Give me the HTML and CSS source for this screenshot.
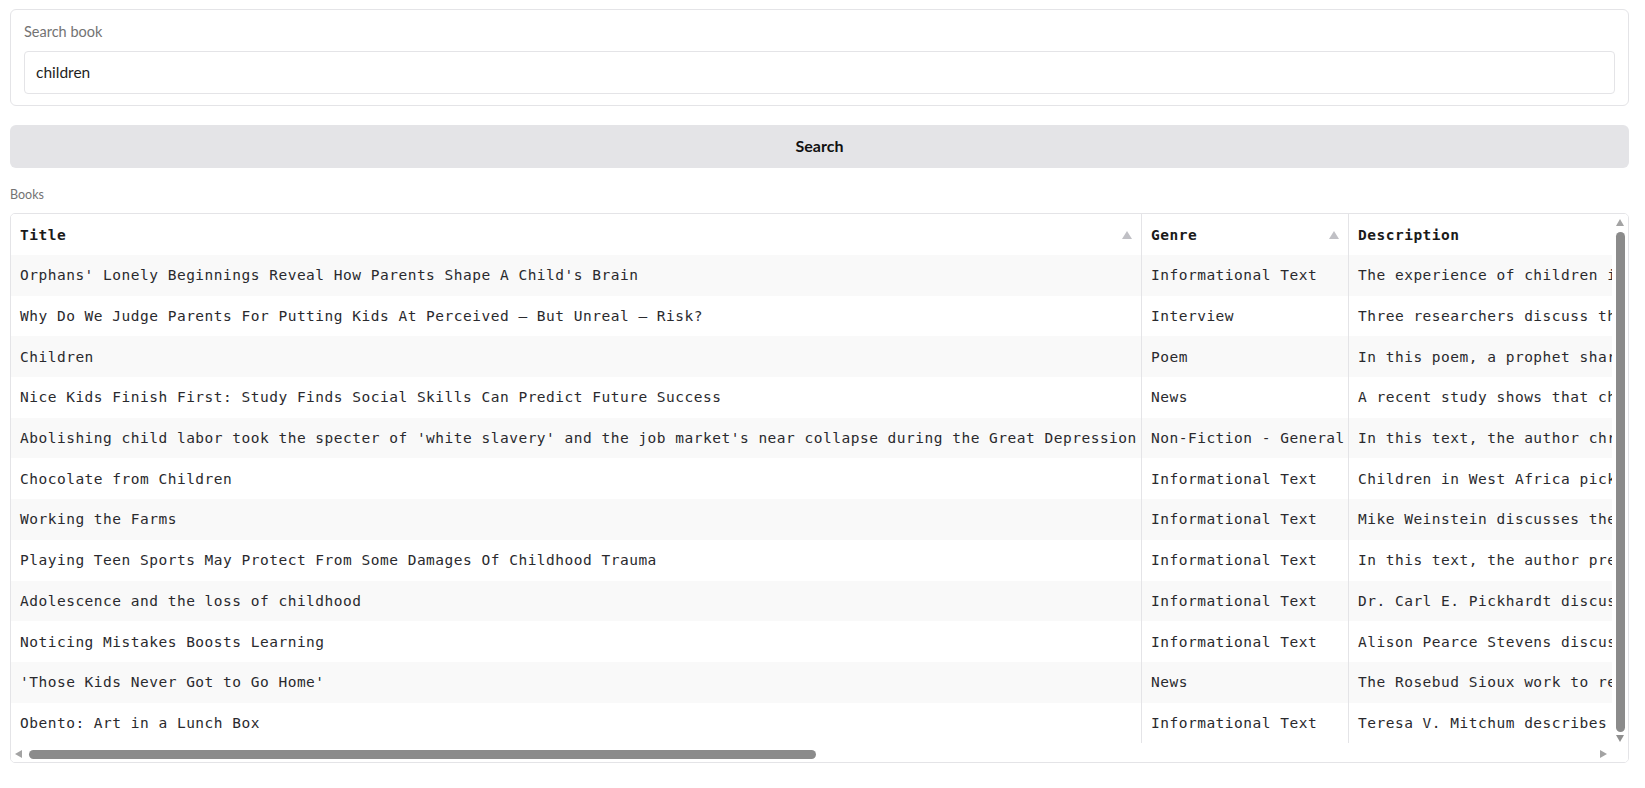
FILE: index.html
```html
<!DOCTYPE html>
<html lang="en">
<head>
<meta charset="utf-8">
<title>Search book</title>
<link rel="stylesheet" href="styles.css">
</head>
<body>
<main class="app">
  <section class="block">
    <label class="block-label" for="q">Search book</label>
    <input id="q" class="text-input" type="text" value="children">
  </section>
  <button class="search-btn" type="button">Search</button>
  <div class="table-label">Books</div>
  <div class="grid">
    <div class="viewport">
      <table class="grid-table">
        <colgroup>
          <col class="col-title">
          <col class="col-genre">
          <col class="col-desc">
        </colgroup>
        <thead>
          <tr>
            <th><div class="th-inner"><span>Title</span><svg class="sort" width="10" height="8" viewBox="0 0 10 8"><path d="M5 0L10 8H0Z"/></svg></div></th>
            <th><div class="th-inner"><span>Genre</span><svg class="sort" width="10" height="8" viewBox="0 0 10 8"><path d="M5 0L10 8H0Z"/></svg></div></th>
            <th><div class="th-inner"><span>Description</span></div></th>
          </tr>
        </thead>
        <tbody>
          <tr><td>Orphans' Lonely Beginnings Reveal How Parents Shape A Child's Brain</td><td>Informational Text</td><td>The experience of children in orphanages shows how parental care shapes the developing brain and affects later emotional and cognitive growth.</td></tr>
          <tr><td>Why Do We Judge Parents For Putting Kids At Perceived — But Unreal — Risk?</td><td>Interview</td><td>Three researchers discuss the ways in which society judges parents who leave their children unsupervised for short periods of time.</td></tr>
          <tr><td>Children</td><td>Poem</td><td>In this poem, a prophet shares his thoughts on children and the relationship between parents and the young lives they raise.</td></tr>
          <tr><td>Nice Kids Finish First: Study Finds Social Skills Can Predict Future Success</td><td>News</td><td>A recent study shows that children with strong social skills in kindergarten are more likely to succeed as young adults.</td></tr>
          <tr><td>Abolishing child labor took the specter of 'white slavery' and the job market's near collapse during the Great Depression</td><td>Non-Fiction - General</td><td>In this text, the author chronicles the movement to end child labor in the United States during the early twentieth century.</td></tr>
          <tr><td>Chocolate from Children</td><td>Informational Text</td><td>Children in West Africa pick cocoa beans for the chocolate industry, often working long hours in dangerous conditions.</td></tr>
          <tr><td>Working the Farms</td><td>Informational Text</td><td>Mike Weinstein discusses the role of children working on farms and the laws that govern agricultural child labor.</td></tr>
          <tr><td>Playing Teen Sports May Protect From Some Damages Of Childhood Trauma</td><td>Informational Text</td><td>In this text, the author presents research on how participation in team sports can protect teens from the effects of trauma.</td></tr>
          <tr><td>Adolescence and the loss of childhood</td><td>Informational Text</td><td>Dr. Carl E. Pickhardt discusses how adolescence marks the end of childhood and the changes that come with growing up.</td></tr>
          <tr><td>Noticing Mistakes Boosts Learning</td><td>Informational Text</td><td>Alison Pearce Stevens discusses research showing that noticing and correcting mistakes can help the brain learn better.</td></tr>
          <tr><td>'Those Kids Never Got to Go Home'</td><td>News</td><td>The Rosebud Sioux work to return the remains of children who died at a government-run boarding school in Pennsylvania.</td></tr>
          <tr><td>Obento: Art in a Lunch Box</td><td>Informational Text</td><td>Teresa V. Mitchum describes the Japanese art of obento, carefully prepared lunch boxes that parents make for their children.</td></tr>
        </tbody>
      </table>
    </div>
    <div class="vbar">
      <svg class="arrow" width="8" height="7" viewBox="0 0 8 7"><path d="M4 0L8 7H0Z"/></svg>
      <div class="vthumb"></div>
      <svg class="arrow dark" width="8" height="7" viewBox="0 0 8 7"><path d="M4 7L8 0H0Z"/></svg>
    </div>
    <div class="hbar">
      <svg class="arrow" width="7" height="8" viewBox="0 0 7 8"><path d="M0 4L7 0V8Z"/></svg>
      <div class="htrack"><div class="hthumb"></div></div>
      <svg class="arrow" width="7" height="8" viewBox="0 0 7 8"><path d="M7 4L0 0V8Z"/></svg>
    </div>
    <div class="corner"></div>
  </div>
</main>
</body>
</html>
```

FILE: styles.css
```css
* {
  box-sizing: border-box;
}

html, body {
  margin: 0;
  padding: 0;
  background: #ffffff;
}

body {
  font-family: Lato, "Noto Sans", "Liberation Sans", sans-serif;
  color: #27272a;
}

.app {
  display: flex;
  flex-direction: column;
  padding: 9px 16px 0 10px;
}

.block {
  display: flex;
  flex-direction: column;
  border: 1px solid #e4e4e7;
  border-radius: 6px;
  padding: 12px 13px 11px 13px;
  background: #ffffff;
}

.block-label {
  font-size: 14.5px;
  line-height: 20px;
  color: #737373;
  margin-bottom: 9px;
}

.text-input {
  height: 43px;
  border: 1px solid #e4e4e7;
  border-radius: 4px;
  padding: 0 11px 2px 11px;
  font-family: Lato, "Noto Sans", "Liberation Sans", sans-serif;
  font-size: 15.5px;
  color: #1f1f23;
  background: #ffffff;
  outline: none;
}

.search-btn {
  margin-top: 19px;
  height: 43px;
  border: none;
  border-radius: 6px;
  background: #e4e4e7;
  font-family: Lato, "Noto Sans", "Liberation Sans", sans-serif;
  font-weight: 700;
  font-size: 16px;
  color: #111111;
  padding: 0 0 2px 0;
  cursor: pointer;
}

.table-label {
  margin-top: 18px;
  margin-bottom: 10px;
  font-size: 12.5px;
  line-height: 17px;
  color: #737373;
}

.grid {
  height: 550px;
  border: 1px solid #e4e4e7;
  border-radius: 5px;
  overflow: hidden;
  background: #ffffff;
  display: grid;
  grid-template-columns: minmax(0, 1fr) 16px;
  grid-template-rows: minmax(0, 1fr) 16px;
}

.viewport {
  overflow: hidden;
  min-width: 0;
  min-height: 0;
}

.grid-table {
  table-layout: fixed;
  width: 3168px;
  border-collapse: separate;
  border-spacing: 0;
  font-family: "DejaVu Sans Mono", "Liberation Mono", monospace;
  font-size: 14.5px;
  letter-spacing: 0.5px;
  color: #2a2a2e;
}

.col-title { width: 1130px; }
.col-genre { width: 207px; }
.col-desc { width: 1831px; }

.grid-table th,
.grid-table td {
  padding: 0 7px 0 9px;
  white-space: nowrap;
  overflow: hidden;
  text-align: left;
  vertical-align: middle;
}

.grid-table th + th,
.grid-table td + td {
  border-left: 1px solid #e4e4e7;
}

.grid-table th {
  height: 41px;
  font-weight: 700;
  color: #1a1a1a;
  background: #ffffff;
}

.th-inner {
  display: flex;
  align-items: center;
  justify-content: space-between;
}

.sort {
  fill: #c0c0c5;
  margin-right: 2px;
}

.grid-table td {
  height: 40.7px;
}

.grid-table tbody tr:nth-child(odd) td {
  background: #f9f9f9;
}

/* drawn scrollbars */
.arrow {
  fill: #a3a3a3;
  flex: none;
}

.arrow.dark {
  fill: #8f8f8f;
}

.vbar {
  display: flex;
  flex-direction: column;
  align-items: center;
  padding: 5px 0 4px 0;
  background: #ffffff;
}

.vthumb {
  flex: 1;
  width: 9px;
  margin: 6px 0 3px 0;
  border-radius: 5px;
  background: #8b8b8b;
}

.hbar {
  display: flex;
  align-items: center;
  padding: 0 5px 0 4px;
  background: #ffffff;
}

.htrack {
  flex: 1;
  display: flex;
  align-items: center;
  padding: 0 6px 0 7px;
}

.hthumb {
  width: 787px;
  height: 9px;
  border-radius: 5px;
  background: #8b8b8b;
}

.corner {
  background: #ffffff;
}
```
